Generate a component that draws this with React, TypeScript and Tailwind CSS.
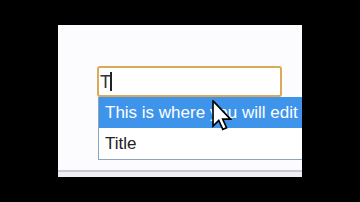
import React from "react";

export default function App() {
  return (
    <div className="w-[360px] h-[202px] bg-black overflow-hidden pt-[25px] pl-[58px]" style={{ fontFamily: '"Liberation Sans", Arial, sans-serif' }}>
      <div className="relative w-[244px] h-[152px] bg-[#fcfcfe] overflow-hidden flex flex-col">
        <div className="flex-1 pt-[41px] pl-[39px]">
          <div className="w-[185px] h-[31px] border-2 border-[#d9aa5a] rounded-[3px] bg-white flex items-center pl-[1px]">
            <span className="text-[18px] leading-none text-[#333]">T</span>
            <span className="w-[2px] h-[19px] bg-[#222] ml-[-1px]" />
          </div>
          <div className="ml-[1px] w-[230px] border-l border-b border-[#8fa3bd] bg-white">
            <div className="h-[31px] bg-[#3d94ea] text-white text-[17px] flex items-center pl-[6px] whitespace-nowrap">
              This is where you will edit
            </div>
            <div className="h-[31px] text-[#222] text-[17px] flex items-center pl-[6px]">Title</div>
          </div>
        </div>
        <div className="h-[7px] border-t-2 border-[#c4c8d0] bg-[#efeff2]" />
        <svg className="absolute left-[154px] top-[75px]" width="20" height="31" viewBox="0 0 12 19">
          <path d="M0.5 0.5 L0.5 16 L4 12.5 L6.5 18 L8.8 17 L6.4 11.7 L11.2 11.7 Z" fill="white" stroke="black" strokeWidth="1" strokeLinejoin="miter" />
        </svg>
      </div>
    </div>
  );
}
